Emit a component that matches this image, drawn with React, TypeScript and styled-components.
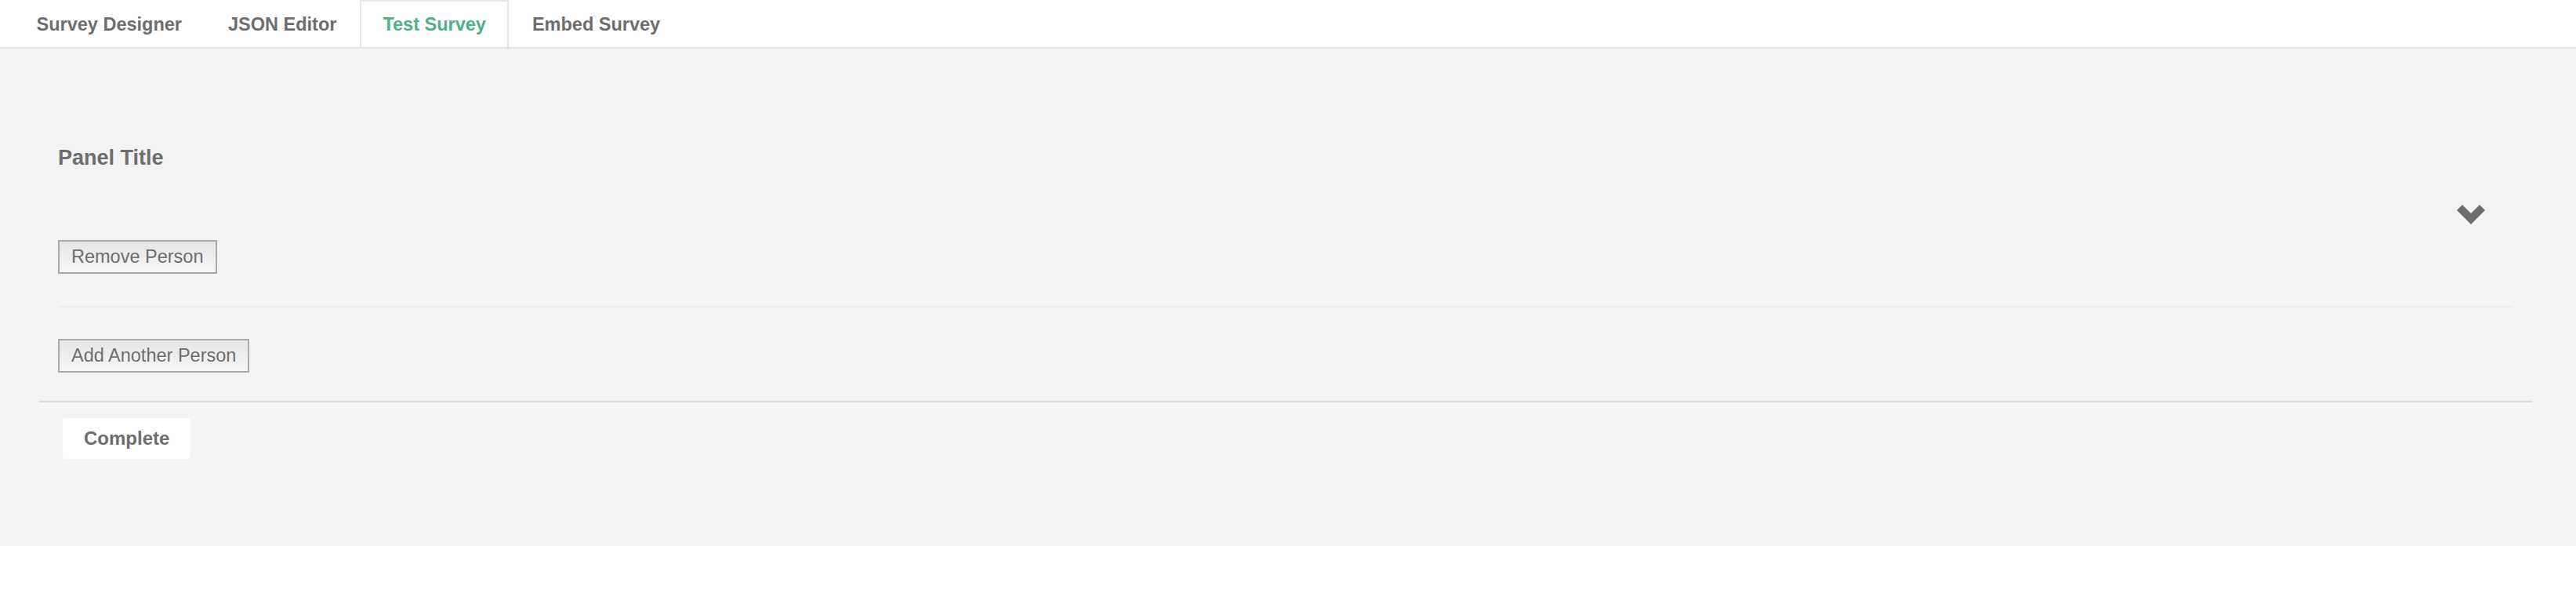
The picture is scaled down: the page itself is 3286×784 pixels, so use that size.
import React from "react";
import styled, { createGlobalStyle, css } from "styled-components";

const GlobalStyle = createGlobalStyle`
  html, body {
    margin: 0;
    padding: 0;
    background: #ffffff;
    font-family: "Liberation Sans", Arial, Helvetica, sans-serif;
    color: #6d6d6d;
  }
  * { box-sizing: border-box; }
`;

const Page = styled.div`
  width: 3286px;
`;

const TabBar = styled.nav`
  display: flex;
  align-items: stretch;
  height: 62px;
  padding-left: 17px;
  background: #ffffff;
  border-bottom: 2px solid #e7e7e7;
`;

const Tab = styled.div<{ $active?: boolean }>`
  display: flex;
  align-items: center;
  height: 60px;
  padding: 0 27.5px;
  border: 2px solid transparent;
  border-bottom: none;
  font-size: 23.5px;
  font-weight: 700;
  color: #6d6d6d;
  white-space: nowrap;
  ${(p) =>
    p.$active &&
    css`
      background: #ffffff;
      border-color: #e7e7e7;
      color: #4fae8c;
    `}
`;

const Body = styled.main`
  background: #f3f3f3;
  padding: 0 56px 92px 50px;
`;

const Survey = styled.section`
  display: flex;
  flex-direction: column;
`;

const PanelBody = styled.div`
  padding: 123px 24px 36px;
`;

const PanelTitle = styled.h3`
  margin: 0;
  font-size: 27px;
  line-height: 32px;
  font-weight: 700;
  color: #6d6d6d;
`;

const ItemRow = styled.div`
  display: flex;
  justify-content: space-between;
  align-items: flex-start;
`;

const ItemContent = styled.div`
  display: flex;
  flex-direction: column;
  padding-top: 89px;
`;

const Chevron = styled.svg`
  display: block;
  width: 36px;
  height: 25px;
  margin-top: 44px;
  margin-right: 36px;
  fill: #6d6d6d;
`;

const Separator = styled.hr`
  margin: 41px 0 0;
  height: 2px;
  border: none;
  background: #ebebeb;
`;

const NativeButton = styled.button<{ $top?: number }>`
  align-self: flex-start;
  display: inline-flex;
  align-items: center;
  height: 43px;
  margin-top: ${(p) => p.$top ?? 0}px;
  padding: 0 15px;
  border: 2px solid #aaaaaa;
  border-radius: 0;
  background: linear-gradient(#e6e6e6, #f6f6f6);
  font-family: "Liberation Sans", Arial, Helvetica, sans-serif;
  font-size: 23.5px;
  color: #6d6d6d;
  white-space: nowrap;
`;

const AddRow = styled.div`
  display: flex;
`;

const Footer = styled.footer`
  border-top: 2px solid #dcdcdc;
  background: #f4f4f4;
  padding: 20px 30px 19px;
`;

const CompleteButton = styled.button`
  height: 52px;
  padding: 0 27px;
  border: none;
  border-radius: 4px;
  background: #ffffff;
  font-family: "Liberation Sans", Arial, Helvetica, sans-serif;
  font-size: 24px;
  font-weight: 700;
  color: #6d6d6d;
`;

const tabs = ["Survey Designer", "JSON Editor", "Test Survey", "Embed Survey"];

export default function App() {
  return (
    <Page>
      <GlobalStyle />
      <TabBar>
        {tabs.map((t) => (
          <Tab key={t} $active={t === "Test Survey"}>
            {t}
          </Tab>
        ))}
      </TabBar>
      <Body>
        <Survey>
          <PanelBody>
            <PanelTitle>Panel Title</PanelTitle>
            <ItemRow>
              <ItemContent>
                <NativeButton>Remove Person</NativeButton>
              </ItemContent>
              <Chevron viewBox="0 0 36 25" aria-hidden="true">
                <path d="M0 7 L7 0 L18 11 L29 0 L36 7 L18 25 Z" />
              </Chevron>
            </ItemRow>
            <Separator />
            <AddRow>
              <NativeButton $top={40}>Add Another Person</NativeButton>
            </AddRow>
          </PanelBody>
          <Footer>
            <CompleteButton>Complete</CompleteButton>
          </Footer>
        </Survey>
      </Body>
    </Page>
  );
}
